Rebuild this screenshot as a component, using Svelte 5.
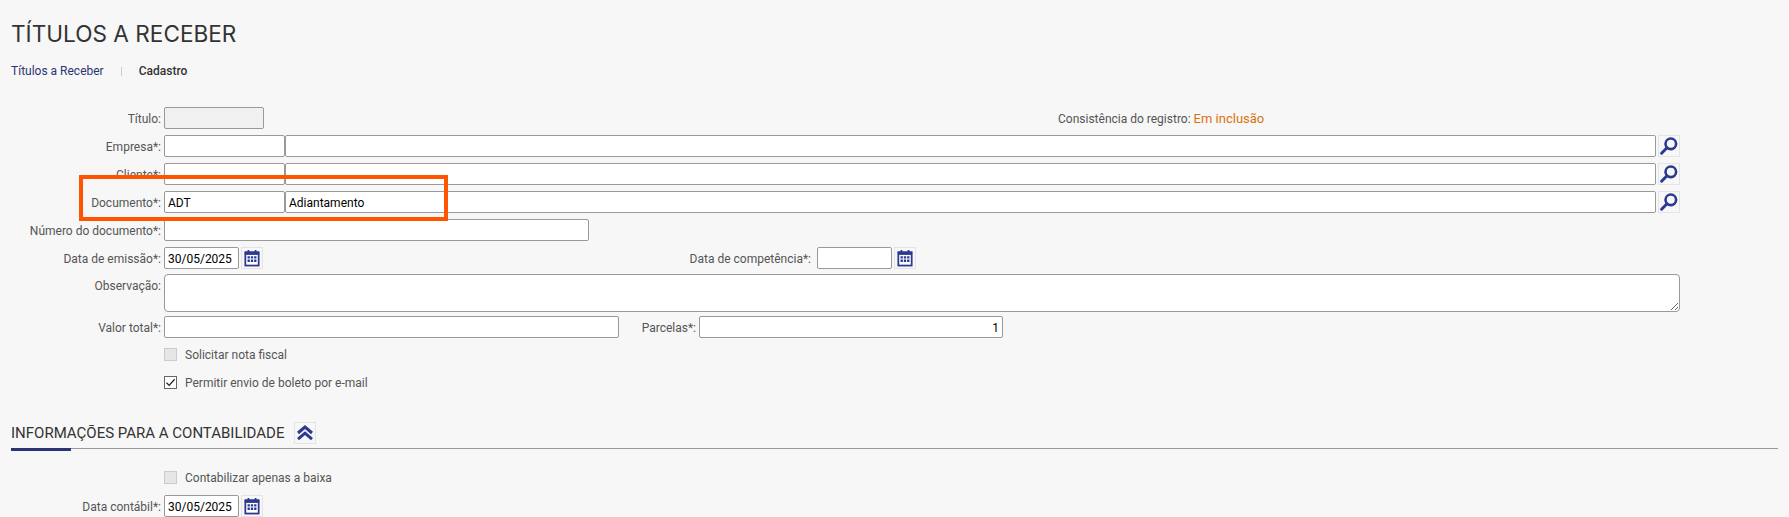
<!--
  Títulos a Receber: cadastro form with the "Documento" row highlighted.
-->
<script>
  const lookups = [
    { label: 'Empresa*:', code: '', name: '' },
    { label: 'Cliente*:', code: '', name: '' },
    { label: 'Documento*:', code: 'ADT', name: 'Adiantamento' },
  ];
</script>

{#snippet searchIcon()}
  <button class="icon-btn" type="button" aria-label="Pesquisar">
    <svg width="20" height="20" viewBox="0 0 20 20" fill="none" stroke="#2b3990">
      <circle cx="11.8" cy="7.8" r="5.3" stroke-width="2.6" />
      <path d="M8 11.8 2.6 17.2" stroke-width="3" stroke-linecap="round" />
    </svg>
  </button>
{/snippet}

{#snippet calendarIcon()}
  <button class="icon-btn" type="button" aria-label="Calendário">
    <svg width="16" height="18" viewBox="0 0 18 20">
      <path d="M4 1h2v3H4zM12 1h2v3h-2z" fill="#2b3990" />
      <rect x="1.5" y="3.5" width="15" height="15" fill="#fff" stroke="#2b3990" stroke-width="2" />
      <rect x="1" y="3" width="16" height="3.5" fill="#2b3990" />
      <path d="M4 8h2.6v2.6H4zM7.7 8h2.6v2.6H7.7zM11.4 8H14v2.6h-2.6zM4 11.8h2.6v2.6H4zM7.7 11.8h2.6v2.6H7.7zM11.4 11.8H14v2.6h-2.6z" fill="#2b3990" />
    </svg>
  </button>
{/snippet}

<div class="page">
  <h1>TÍTULOS A RECEBER</h1>

  <nav class="crumbs">
    <span class="crumb-link">Títulos a Receber</span>
    <span class="crumb-sep"></span>
    <span class="crumb-current">Cadastro</span>
  </nav>

  <form class="form">
    <div class="row">
      <span class="label">Título:</span>
      <input class="field disabled" style:width="100px" disabled />
      <span class="status">Consistência do registro: <em>Em inclusão</em></span>
    </div>

    {#each lookups as item}
      <div class="row">
        <span class="label">{item.label}</span>
        <input class="field code" value={item.code} readonly />
        <input class="field name" value={item.name} readonly />
        {@render searchIcon()}
      </div>
    {/each}

    <div class="row">
      <span class="label">Número do documento*:</span>
      <input class="field" style:width="425px" readonly />
    </div>

    <div class="row before-notes">
      <span class="label">Data de emissão*:</span>
      <input class="field date" value="30/05/2025" readonly />
      {@render calendarIcon()}
      <span class="label competencia">Data de competência*:</span>
      <input class="field date" readonly />
      {@render calendarIcon()}
    </div>

    <div class="row tall">
      <span class="label">Observação:</span>
      <textarea class="field notes" readonly></textarea>
    </div>

    <div class="row">
      <span class="label">Valor total*:</span>
      <input class="field" style:width="455px" readonly />
      <span class="label parcelas">Parcelas*:</span>
      <input class="field number" style:width="304px" value="1" readonly />
    </div>

    <div class="check-row first">
      <span class="check off"></span>
      <span>Solicitar nota fiscal</span>
    </div>
    <div class="check-row">
      <span class="check on">
        <svg width="11" height="11" viewBox="0 0 11 11" fill="none" stroke="#222" stroke-width="1.3">
          <path d="M1.5 5.8 4.2 8.4 9.6 2.2" />
        </svg>
      </span>
      <span>Permitir envio de boleto por e-mail</span>
    </div>
  </form>

  <section class="section">
    <div class="section-head">
      <h2>INFORMAÇÕES PARA A CONTABILIDADE</h2>
      <button class="icon-btn" type="button" aria-label="Recolher">
        <svg width="18" height="16" viewBox="0 0 18 16" fill="none" stroke="#2b3990" stroke-width="3">
          <path d="M2 8 9 2 16 8M2 14.2 9 8.2 16 14.2" />
        </svg>
      </button>
    </div>
    <div class="check-row section-check">
      <span class="check off"></span>
      <span>Contabilizar apenas a baixa</span>
    </div>
    <div class="row">
      <span class="label">Data contábil*:</span>
      <input class="field date" value="30/05/2025" readonly />
      {@render calendarIcon()}
    </div>
  </section>

  <div class="highlight"></div>
</div>

<style>
  :global(body) {
    background: #f7f7f7;
    overflow: hidden;
  }

  .page {
    position: relative;
    height: 517px;
    overflow: hidden;
    padding: 20px 11px 0;
    box-sizing: border-box;
    font-family: Roboto, "Liberation Sans", sans-serif;
    font-size: 12px;
    color: #555;
  }

  h1 {
    margin: 0;
    font-family: Inter, Roboto, sans-serif;
    font-size: 22.6px;
    font-weight: 400;
    line-height: 27px;
    color: #333;
  }

  .crumbs {
    display: flex;
    align-items: center;
    height: 16px;
    margin-top: 16px;
  }

  .crumb-link {
    color: #2b3472;
  }

  .crumb-sep {
    width: 1px;
    height: 9px;
    margin: 0 17px;
    background: #ccc;
  }

  .crumb-current {
    font-weight: 500;
    color: #333;
  }

  .form {
    margin: 28px 0 0 -11px;
  }

  .row {
    display: flex;
    align-items: flex-start;
    height: 22px;
    margin-bottom: 6px;
  }

  .row.before-notes {
    margin-bottom: 5px;
  }

  .row.tall {
    height: 38px;
    margin-bottom: 4px;
  }

  .label {
    flex: none;
    padding-right: 3px;
    box-sizing: border-box;
    text-align: right;
    line-height: 24px;
    font-size: 12px;
    white-space: nowrap;
  }

  .row > .label:first-child {
    width: 164px;
  }

  .competencia {
    width: 554px;
    padding-right: 6px;
  }

  .parcelas {
    width: 80px;
  }

  .field {
    flex: none;
    height: 22px;
    margin: 0;
    padding: 1px 3px 0;
    box-sizing: border-box;
    border: 1px solid #999;
    border-radius: 2px;
    background: #fff;
    font-family: Roboto, "Liberation Sans", sans-serif;
    font-size: 12px;
    color: #000;
    outline: none;
  }

  .disabled {
    background: #f0f0f0;
  }

  .code {
    width: 121px;
  }

  .name {
    width: 1371px;
  }

  .date {
    width: 75px;
  }

  .notes {
    display: block;
    width: 1516px;
    height: 38px;
    border-radius: 4px;
    resize: both;
  }

  .number {
    text-align: right;
  }

  .icon-btn {
    display: flex;
    flex: none;
    align-items: center;
    justify-content: center;
    width: 22px;
    height: 22px;
    margin: 0 0 0 2px;
    padding: 0;
    box-sizing: border-box;
    border: 1px solid #e4e4e4;
    background: #f7f7f7;
  }

  .status {
    margin-left: 794px;
    line-height: 24px;
    color: #555;
    white-space: nowrap;
  }

  .status em {
    font-style: normal;
    font-size: 13px;
    color: #d9730d;
  }

  .check-row {
    display: flex;
    align-items: center;
    gap: 8px;
    height: 13px;
    margin: 15px 0 0 164px;
    line-height: 14px;
  }

  .check-row.first {
    margin-top: 10px;
  }

  .check {
    display: flex;
    align-items: center;
    justify-content: center;
    width: 13px;
    height: 13px;
    box-sizing: border-box;
  }

  .check.off {
    border: 1px solid #ccc;
    background: #e6e6e6;
  }

  .check.on {
    border: 1px solid #666;
    background: #fff;
  }

  .section {
    margin: 33px 0 0 -11px;
  }

  .section-head {
    display: flex;
    align-items: center;
    gap: 8px;
    height: 21px;
    margin-left: 11px;
    padding-bottom: 5px;
    border-bottom: 1px solid #999;
    position: relative;
    width: 1767px;
  }

  .section-head::after {
    content: "";
    position: absolute;
    left: 0;
    bottom: -3px;
    width: 60px;
    height: 3px;
    background: #2b3472;
  }

  h2 {
    margin: 0;
    font-size: 15px;
    font-weight: 400;
    color: #333;
  }

  .section-check {
    margin-top: 22px;
    margin-bottom: 11px;
  }

  .highlight {
    position: absolute;
    left: 79px;
    top: 175px;
    width: 369px;
    height: 46px;
    box-sizing: border-box;
    border: 4px solid #ff5500;
    pointer-events: none;
  }
</style>
